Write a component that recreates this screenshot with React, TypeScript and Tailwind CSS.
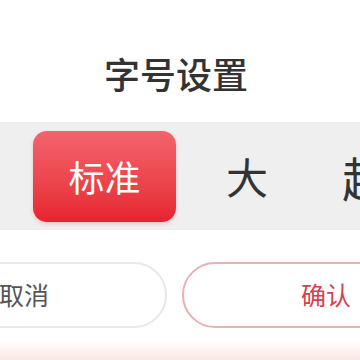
import React from "react";

export default function App() {
  const font = { fontFamily: '"Noto Sans CJK SC", "Noto Sans", sans-serif' };
  return (
    <div className="w-[360px] h-[360px] overflow-hidden bg-white flex flex-col" style={font}>
      <div className="h-[122px] shrink-0 pt-[55px] w-[352px] text-center">
        <span className="text-[36px] leading-[36px] font-medium text-[#333333]">字号设置</span>
      </div>
      <div className="h-[108px] shrink-0 bg-[#efefef] flex items-center">
        <div className="flex items-center ml-[33px] shrink-0">
          <div className="w-[143px] h-[91px] rounded-[14px] bg-gradient-to-b from-[#f3636d] to-[#e6222f] flex items-center justify-center text-white text-[36px] leading-none shadow-[0_2px_4px_rgba(230,34,47,0.2)]">
            标准
          </div>
          <div className="w-[142px] h-[91px] flex items-center justify-center text-[42px] leading-none text-[#333]">大</div>
          <div className="w-[142px] h-[91px] flex items-center justify-center text-[47px] leading-none text-[#333] whitespace-nowrap">超大</div>
        </div>
      </div>
      <div className="h-[32px] shrink-0" />
      <div className="flex gap-[15px] ml-[-119px] shrink-0">
        <div className="w-[286px] h-[66px] shrink-0 rounded-full border-2 border-[#e8e8e8] flex items-center justify-center text-[25px] text-[#555]">
          取消
        </div>
        <div className="w-[288px] h-[66px] shrink-0 rounded-full border-2 border-[#eab0b4] flex items-center justify-center text-[25px] text-[#d8404c]">
          确认
        </div>
      </div>
      <div className="h-[12px] shrink-0" />
      <div className="flex-1 bg-gradient-to-b from-white to-[#fde6e3]" />
    </div>
  );
}
